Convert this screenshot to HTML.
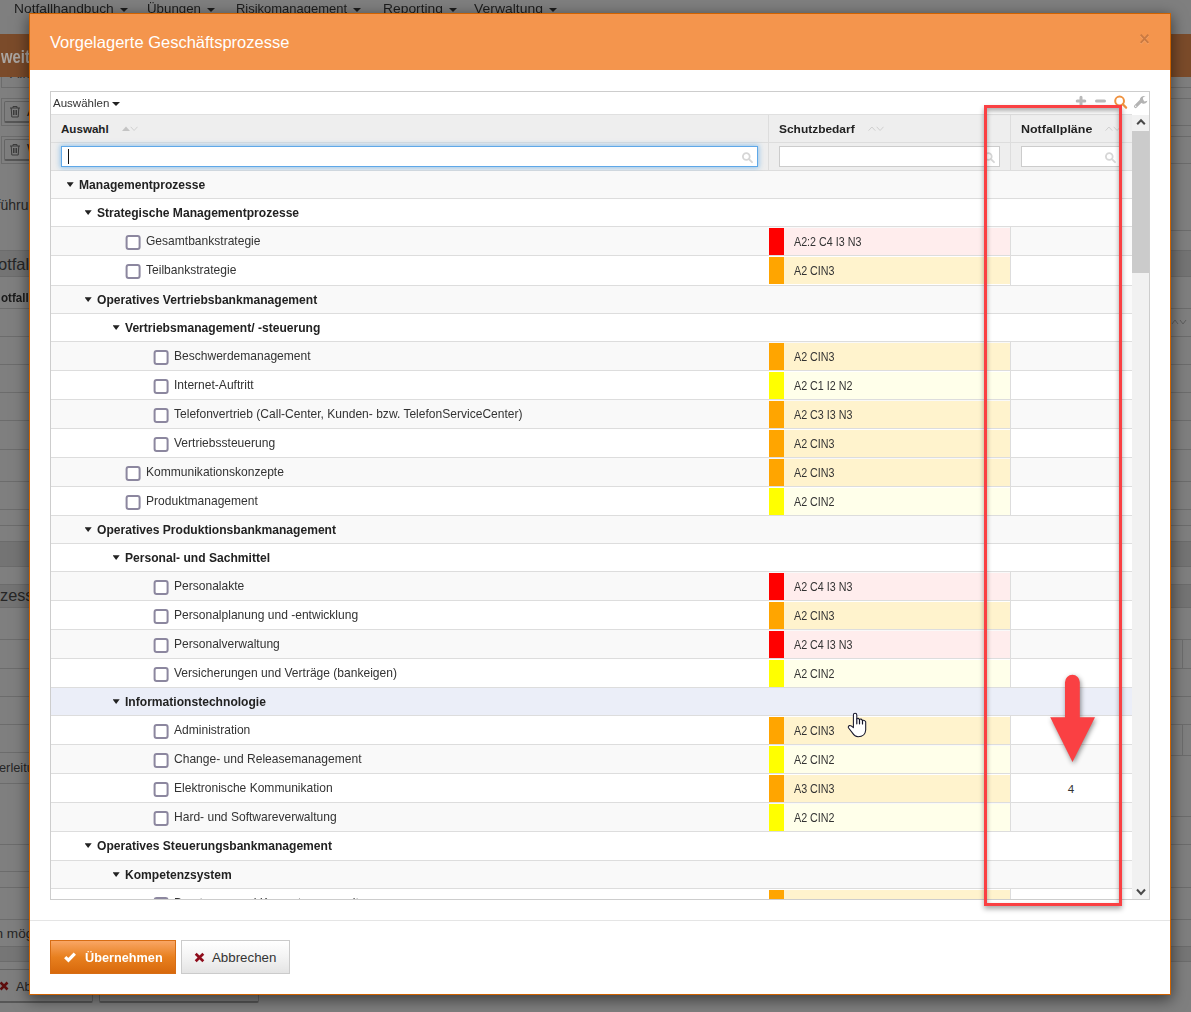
<!DOCTYPE html>
<html lang="de"><head><meta charset="utf-8"><title>Vorgelagerte Geschäftsprozesse</title>
<style>
*{box-sizing:border-box;margin:0;padding:0}
html,body{width:1191px;height:1012px;overflow:hidden}
body{position:relative;background:#7f7f7f;font-family:"Liberation Sans",sans-serif;color:#222;font-size:12px}
.abs{position:absolute}
/* ---------- dimmed background page ---------- */
.bg{position:absolute;left:0;top:0;width:1191px;height:1012px;overflow:hidden}
.bg .nav{position:absolute;top:0px;left:0;height:22px;font-size:12.6px;line-height:14px;color:#1c1c1c;white-space:nowrap}
.bg .nav span{position:absolute;top:1.7px;transform-origin:0 50%}
.bg .car{position:absolute;width:0;height:0;border-left:4px solid transparent;border-right:4px solid transparent;border-top:4px solid #1c1c1c;top:8px}
.bg .bar{position:absolute;background:#7b4b2a}
.bg .ln{position:absolute;left:0;width:1191px;height:1px;background:#6c6c6c}
.bg .vln{position:absolute;width:1px;background:#6c6c6c}
.bg .band{position:absolute;left:0;width:1191px;background:#747474;border-top:1px solid #6c6c6c;border-bottom:1px solid #6c6c6c}
.bg .ob{position:absolute;border:1px solid #6c6c6c}
.bg .bb{position:absolute;border:1px solid #646464;border-bottom:2px solid #575757;border-radius:2px;background:#7e7e7e}
.bg .t{position:absolute;white-space:nowrap;color:#1a1a1a}
/* ---------- modal ---------- */
.modal{position:absolute;left:29px;top:13px;width:1142px;height:982px;background:#fff;border:1px solid #cf6200;box-shadow:0 4px 14px 1px rgba(0,0,0,.5)}
.mh{position:absolute;left:0;top:0;width:1140px;height:56px;background:#f4954d}
.mh h4{position:absolute;left:20px;top:18px;font-size:16.5px;line-height:20px;font-weight:normal;color:#fff;white-space:nowrap}
.mh .x{position:absolute;left:1110px;top:20px;width:9px;height:9.5px;overflow:visible}
.fl{position:absolute;left:30px;top:920px;width:1140px;height:1px;background:#e5e5e5}
.sx{transform-origin:0 50%;display:inline-block}
/* ---------- grid ---------- */
.grid{position:absolute;left:50px;top:91px;width:1100px;height:808px;overflow:hidden;background:#fff}
.gridb{position:absolute;left:50px;top:91px;width:1100px;height:809px;border:1px solid #cdcdcd;pointer-events:none}
.tb{position:absolute;left:0;top:0;width:1100px;height:24px}
.tb .sel{position:absolute;left:3px;top:5px;font-size:11.2px;line-height:14px;color:#333;transform:scaleX(1.03);transform-origin:0 50%}
.tb .car{position:absolute;left:62px;top:11px;width:0;height:0;border-left:4px solid transparent;border-right:4px solid transparent;border-top:4px solid #222}
.hd{position:absolute;left:0;top:23px;width:1082px;height:29px;background:#eeeeee;border-top:1px solid #e0e0e0;border-bottom:1px solid #ddd}
.ft{position:absolute;left:0;top:52px;width:1082px;height:28px;background:#eeeeee;border-bottom:1px solid #ddd}
.hd b{position:absolute;top:7px;font-size:11.6px;line-height:14px;color:#222;white-space:nowrap;transform:scaleX(1.03);transform-origin:0 50%}
.hd svg{position:absolute;top:11px}
.cv{position:absolute;top:24px;width:1px;height:56px;background:#ddd}
.inp{position:absolute;height:21px;background:#fff;border:1px solid #ccc}
.inp.f{border-color:#5fa8e8;box-shadow:0 0 5px 1px rgba(102,175,233,.65)}
.inp svg{position:absolute;right:3px;top:4px}
.cur{position:absolute;left:18px;top:58px;width:1px;height:15px;background:#111}
.row{position:absolute;left:0;width:1082px;background:#fff;border-bottom:1px solid #ddd}
.row.alt{background:#f9f9f9}
.row.hov{background:#ebeef8}
.ar{position:absolute;top:11.3px;margin-left:.6px;width:7.1px;height:4.6px;background:#222;clip-path:polygon(0 0,100% 0,50% 100%)}
.gt{position:absolute;top:7px;font-size:12.4px;line-height:15px;white-space:nowrap;color:#222;transform:scaleX(.975);transform-origin:0 50%}
.cb{position:absolute;top:8px;width:15px;height:15px;border:2px solid #8c879f;border-radius:3px;background:#fff;transform:translateX(-.4px)}
.lt{position:absolute;top:7px;font-size:12.4px;line-height:15px;white-space:nowrap;color:#333;transform:scaleX(.972);transform-origin:0 50%}
.sb{position:absolute;left:719px;top:1px;width:242px;height:27px}
.sb i{position:absolute;left:0;top:0;width:15px;height:27px}
.sb span{position:absolute;left:25px;top:7px;font-size:12.1px;line-height:14px;color:#333;white-space:nowrap;transform:scaleX(.887);transform-origin:0 50%}
.sb.r{background:#ffeded}.sb.r i{background:#ff0000}
.sb.o{background:#fff3cd}.sb.o i{background:#ffa500}
.sb.y{background:#ffffea}.sb.y i{background:#ffff00}
.vl{position:absolute;left:960px;top:0;width:1px;height:29px;background:#ddd}
.nf{position:absolute;left:961px;width:120px;text-align:center;top:8px;font-size:11.6px;line-height:14px;color:#333}
/* scrollbar */
.scr{position:absolute;left:1082px;top:24px;width:18px;height:785px;background:#f1f1f1}
.scr .th{position:absolute;left:0;top:16px;width:17px;height:142px;background:#cbcbcb}
.scr svg{position:absolute;left:4px}
/* buttons */
.btn{position:absolute;top:940px;height:34px;white-space:nowrap}
.b1{left:50px;width:126px;background:linear-gradient(#f9a665,#e8801f 50%,#d8690c);border:1px solid #d76d14;color:#fff}
.b2{left:181px;width:109px;background:linear-gradient(#fff,#f3f3f3 50%,#e4e4e4);border:1px solid #cbcbcb;color:#333}
.btn span{position:absolute;top:8px;line-height:17px}
.btn svg{position:absolute}
/* annotation */
.rr{position:absolute;left:984px;top:105px;width:138px;height:801px;border:3px solid #fa4043;box-shadow:0 3px 5px rgba(0,0,0,.33),inset 0 3px 5px rgba(0,0,0,.33)}
</style></head><body>
<div class="bg">
 <div class="nav">
  <span style="left:14px;transform:scaleX(1.096)">Notfallhandbuch</span><i class="car" style="left:120px"></i>
  <span style="left:147px;transform:scaleX(1.056)">Übungen</span><i class="car" style="left:207px"></i>
  <span style="left:236px;transform:scaleX(1.03)">Risikomanagement</span><i class="car" style="left:353px"></i>
  <span style="left:383px;transform:scaleX(1.099)">Reporting</span><i class="car" style="left:449px"></i>
  <span style="left:474px;transform:scaleX(1.107)">Verwaltung</span><i class="car" style="left:549px"></i>
 </div>
 <div class="ob" style="left:1px;top:60px;width:1200px;height:28px"></div>
 <span class="t" style="left:10px;top:65px;font-size:14px;color:#333">Alle</span>
 <div class="bar" style="left:0;top:34px;width:1191px;height:43px"></div>
 <b class="t" style="left:.5px;top:45.5px;font-size:19px;color:#aba6a2;transform:scaleX(.78);transform-origin:0 50%">weitere Suchoptionen</b>
 <div class="ob" style="left:1px;top:98px;width:1200px;height:28px"></div>
 <div class="bb" style="left:4px;top:101px;width:150px;height:22px"></div>
 <div class="ob" style="left:1px;top:136px;width:1200px;height:28px"></div>
 <div class="bb" style="left:4px;top:139px;width:150px;height:22px"></div>
 <svg class="abs" style="left:9px;top:105px" width="12" height="13" viewBox="0 0 12 13"><path d="M1 3h10M4 3V1.500h4V3M2.200 3l.6 9h6.400l.6-9M4.500 5v5M6 5v5M7.500 5v5" stroke="#3c3c3c" stroke-width="1" fill="none"/></svg>
 <svg class="abs" style="left:9px;top:143px" width="12" height="13" viewBox="0 0 12 13"><path d="M1 3h10M4 3V1.500h4V3M2.200 3l.6 9h6.400l.6-9M4.500 5v5M6 5v5M7.500 5v5" stroke="#3c3c3c" stroke-width="1" fill="none"/></svg>
 <span class="t" style="left:27px;top:103px;font-size:14px">Alle</span>
 <span class="t" style="left:27px;top:141px;font-size:14px">Wählen</span>
 <span class="t" style="right:1190.5px;top:197px;font-size:14px;color:#262626">Durchf</span><span class="t" style="left:.5px;top:197px;font-size:14px;color:#262626">ührung</span>
 <div class="ln" style="top:230px;left:1171px;width:20px"></div>
 <div class="band" style="top:250px;height:27px"></div>
 <span class="t" style="right:1193px;top:254.5px;font-size:16.5px;color:#262626">N</span><span class="t" style="left:-2px;top:254.5px;font-size:16.5px;color:#262626">otfallpläne</span>
 <b class="t" style="left:1.2px;top:290px;font-size:13.2px;transform:scaleX(.88);transform-origin:0 50%">otfallplan</b>
 <svg class="abs" style="left:1171px;top:318px" width="16" height="8" viewBox="0 0 16 8"><path d="M1 6l3-4 3 4M9 2l3 4 3-4" stroke="#5e5e5e" stroke-width="1" fill="none"/></svg>
 <div class="ln" style="top:308px"></div><div class="ln" style="top:336px"></div><div class="ln" style="top:364px"></div>
 <div class="ln" style="top:392px"></div><div class="ln" style="top:420px"></div><div class="ln" style="top:449px"></div>
 <div class="ln" style="top:481px"></div><div class="ln" style="top:509px"></div><div class="ln" style="top:525px"></div>
 <div class="band" style="top:541px;height:26px"></div>
 <div class="band" style="top:584px;height:24px"></div>
 <span class="t" style="right:1191px;top:585.5px;font-size:16.3px;color:#262626">Pro</span><span class="t" style="left:0px;top:585.5px;font-size:16.3px;color:#262626">zesse</span>
 <div class="ln" style="top:639px"></div><div class="ln" style="top:668px"></div><div class="ln" style="top:696px"></div>
 <div class="ln" style="top:724px"></div><div class="ln" style="top:752px;width:40px"></div><div class="ln" style="top:783px;width:40px"></div>
 <div class="ln" style="top:755px;left:1165px;width:26px"></div><div class="ln" style="top:816px;left:1165px;width:26px"></div>
 <div class="vln" style="left:1182px;top:639px;height:29px"></div><div class="vln" style="left:1182px;top:724px;height:31px"></div>
 <span class="t" style="right:1192px;top:760px;font-size:12.8px;color:#262626">Weit</span><span class="t" style="left:-1px;top:760px;font-size:12.8px;color:#262626">erleitung</span>
 <div class="ln" style="top:844px"></div><div class="ln" style="top:871px;width:40px"></div><div class="ln" style="top:887px"></div>
 <div class="ln" style="top:919px"></div>
 <span class="t" style="right:1195.5px;top:925.5px;font-size:13.6px;color:#262626">Auswahl vo</span><span class="t" style="left:-4.5px;top:925.5px;font-size:13.6px;color:#262626">n möglich</span>
 <div class="band" style="top:946px;height:16px;background:#767676"></div>
 <div class="bb" style="left:-10px;top:969px;width:103px;height:34px"></div>
 <div class="bb" style="left:99px;top:969px;width:160px;height:34px"></div>
 <svg class="abs" style="left:-1px;top:981px" width="10" height="10" viewBox="0 0 10 10"><path d="M1.500 1.500l7 7M8.500 1.500l-7 7" stroke="#5d0c0c" stroke-width="2.600" fill="none"/></svg>
 <span class="t" style="left:16px;top:979px;font-size:12.8px;color:#262626">Abbrechen</span>
</div>

<div class="modal">
 <div class="mh"><h4>Vorgelagerte Geschäftsprozesse</h4>
  <svg class="x" viewBox="0 0 9 9.5"><path d="M.7 1.700L8.300 9.800M8.300 1.700L.7 9.800" stroke="#f9b88a" stroke-width="1.800" fill="none" opacity=".5"/><path d="M.7 .7L8.300 8.800M8.300 .7L.7 8.800" stroke="#c97a42" stroke-width="1.900" fill="none"/></svg>
 </div>
</div>
<div class="fl"></div>

<div class="grid">
 <div class="tb"><span class="sel">Auswählen</span><i class="car"></i>
  <svg class="abs" style="left:1025px;top:4px" width="74" height="14" viewBox="0 0 74 14">
   <path d="M6 2.200v7.600M2.200 6h7.600" stroke="#b9b9b9" stroke-width="3" stroke-linecap="round" fill="none"/>
   <path d="M21.500 6h8" stroke="#b9b9b9" stroke-width="3" stroke-linecap="round" fill="none"/>
   <circle cx="44.600" cy="6" r="4.400" stroke="#f0923f" stroke-width="2" fill="none"/>
   <path d="M47.800 9.300l3.300 3.300" stroke="#f0923f" stroke-width="2.200" stroke-linecap="round" fill="none"/>
   <path d="M60.600 11.400l6.200-6.200" stroke="#b3b3b3" stroke-width="3.300" stroke-linecap="round" fill="none"/>
   <path d="M70.600 1.600a3.800 3.800 0 1 0 1.800 4.200l-2.900.6-1.900-1.800.8-2.700z" fill="#b3b3b3"/>
   <circle cx="60.700" cy="11.300" r=".7" fill="#fff"/>
  </svg>
 </div>
 <div class="hd">
  <b style="left:11px;transform:scaleX(1)">Auswahl</b>
  <svg style="left:72px" width="16" height="6" viewBox="0 0 16 6"><path d="M0 5l4-4.500 4 4.500z" fill="#c4c4c4"/><path d="M8.700 .8l3.400 3.700 3.400-3.700" stroke="#d0d0d0" stroke-width="1" fill="none"/></svg>
  <b style="left:729px">Schutzbedarf</b>
  <svg style="left:818px" width="16" height="6" viewBox="0 0 16 6"><path d="M.5 4.700l3.400-3.700 3.400 3.700M8.700 .8l3.400 3.700 3.400-3.700" stroke="#cfcfcf" stroke-width="1" fill="none"/></svg>
  <b style="left:971px;transform:scaleX(1.075)">Notfallpläne</b>
  <svg style="left:1055px" width="16" height="6" viewBox="0 0 16 6"><path d="M.5 4.700l3.400-3.700 3.400 3.700M8.700 .8l3.400 3.700 3.400-3.700" stroke="#cfcfcf" stroke-width="1" fill="none"/></svg>
 </div>
 <div class="ft"></div>
 <div class="cv" style="left:718px"></div>
 <div class="cv" style="left:960px"></div>
 <div class="inp f" style="left:11px;top:55px;width:697px"><svg width="13" height="13" viewBox="0 0 13 13"><circle cx="5.300" cy="5.500" r="3.400" stroke="#d6d6d6" stroke-width="1.800" fill="none"/><path d="M7.900 8.100l3.100 3.100" stroke="#d6d6d6" stroke-width="1.900" stroke-linecap="round"/></svg></div>
 <div class="cur"></div>
 <div class="inp" style="left:729px;top:55px;width:221px"><svg width="13" height="13" viewBox="0 0 13 13"><circle cx="5.300" cy="5.500" r="3.400" stroke="#d6d6d6" stroke-width="1.800" fill="none"/><path d="M7.900 8.100l3.100 3.100" stroke="#d6d6d6" stroke-width="1.900" stroke-linecap="round"/></svg></div>
 <div class="inp" style="left:971px;top:55px;width:100px"><svg width="13" height="13" viewBox="0 0 13 13"><circle cx="5.300" cy="5.500" r="3.400" stroke="#d6d6d6" stroke-width="1.800" fill="none"/><path d="M7.900 8.100l3.100 3.100" stroke="#d6d6d6" stroke-width="1.900" stroke-linecap="round"/></svg></div>
<div class="row g alt" style="top:80px;height:28px"><i class="ar" style="left:16px"></i><b class="gt" style="left:29px">Managementprozesse</b></div>
<div class="row g" style="top:108px;height:28px"><i class="ar" style="left:34px"></i><b class="gt" style="left:47px">Strategische Managementprozesse</b></div>
<div class="row l alt" style="top:136px;height:29px"><i class="cb" style="left:76px"></i><span class="lt" style="left:96px">Gesamtbankstrategie</span><div class="sb r"><i></i><span>A2:2 C4 I3 N3</span></div><div class="vl"></div></div>
<div class="row l" style="top:165px;height:30px"><i class="cb" style="left:76px"></i><span class="lt" style="left:96px">Teilbankstrategie</span><div class="sb o"><i></i><span>A2 CIN3</span></div><div class="vl"></div></div>
<div class="row g alt" style="top:195px;height:28px"><i class="ar" style="left:34px"></i><b class="gt" style="left:47px">Operatives Vertriebsbankmanagement</b></div>
<div class="row g" style="top:223px;height:28px"><i class="ar" style="left:62px"></i><b class="gt" style="left:75px">Vertriebsmanagement/ -steuerung</b></div>
<div class="row l alt" style="top:251px;height:29px"><i class="cb" style="left:104px"></i><span class="lt" style="left:124px">Beschwerdemanagement</span><div class="sb o"><i></i><span>A2 CIN3</span></div><div class="vl"></div></div>
<div class="row l" style="top:280px;height:29px"><i class="cb" style="left:104px"></i><span class="lt" style="left:124px">Internet-Auftritt</span><div class="sb y"><i></i><span>A2 C1 I2 N2</span></div><div class="vl"></div></div>
<div class="row l alt" style="top:309px;height:29px"><i class="cb" style="left:104px"></i><span class="lt" style="left:124px">Telefonvertrieb (Call-Center, Kunden- bzw. TelefonServiceCenter)</span><div class="sb o"><i></i><span>A2 C3 I3 N3</span></div><div class="vl"></div></div>
<div class="row l" style="top:338px;height:29px"><i class="cb" style="left:104px"></i><span class="lt" style="left:124px">Vertriebssteuerung</span><div class="sb o"><i></i><span>A2 CIN3</span></div><div class="vl"></div></div>
<div class="row l alt" style="top:367px;height:29px"><i class="cb" style="left:76px"></i><span class="lt" style="left:96px">Kommunikationskonzepte</span><div class="sb o"><i></i><span>A2 CIN3</span></div><div class="vl"></div></div>
<div class="row l" style="top:396px;height:29px"><i class="cb" style="left:76px"></i><span class="lt" style="left:96px">Produktmanagement</span><div class="sb y"><i></i><span>A2 CIN2</span></div><div class="vl"></div></div>
<div class="row g alt" style="top:425px;height:28px"><i class="ar" style="left:34px"></i><b class="gt" style="left:47px">Operatives Produktionsbankmanagement</b></div>
<div class="row g" style="top:453px;height:28px"><i class="ar" style="left:62px"></i><b class="gt" style="left:75px">Personal- und Sachmittel</b></div>
<div class="row l alt" style="top:481px;height:29px"><i class="cb" style="left:104px"></i><span class="lt" style="left:124px">Personalakte</span><div class="sb r"><i></i><span>A2 C4 I3 N3</span></div><div class="vl"></div></div>
<div class="row l" style="top:510px;height:29px"><i class="cb" style="left:104px"></i><span class="lt" style="left:124px">Personalplanung und -entwicklung</span><div class="sb o"><i></i><span>A2 CIN3</span></div><div class="vl"></div></div>
<div class="row l alt" style="top:539px;height:29px"><i class="cb" style="left:104px"></i><span class="lt" style="left:124px">Personalverwaltung</span><div class="sb r"><i></i><span>A2 C4 I3 N3</span></div><div class="vl"></div></div>
<div class="row l" style="top:568px;height:29px"><i class="cb" style="left:104px"></i><span class="lt" style="left:124px">Versicherungen und Verträge (bankeigen)</span><div class="sb y"><i></i><span>A2 CIN2</span></div><div class="vl"></div></div>
<div class="row g alt hov" style="top:597px;height:28px"><i class="ar" style="left:62px"></i><b class="gt" style="left:75px">Informationstechnologie</b></div>
<div class="row l" style="top:625px;height:29px"><i class="cb" style="left:104px"></i><span class="lt" style="left:124px">Administration</span><div class="sb o"><i></i><span>A2 CIN3</span></div><div class="vl"></div></div>
<div class="row l alt" style="top:654px;height:29px"><i class="cb" style="left:104px"></i><span class="lt" style="left:124px">Change- und Releasemanagement</span><div class="sb y"><i></i><span>A2 CIN2</span></div><div class="vl"></div></div>
<div class="row l" style="top:683px;height:29px"><i class="cb" style="left:104px"></i><span class="lt" style="left:124px">Elektronische Kommunikation</span><div class="sb o"><i></i><span>A3 CIN3</span></div><div class="vl"></div><span class="nf">4</span></div>
<div class="row l alt" style="top:712px;height:29px"><i class="cb" style="left:104px"></i><span class="lt" style="left:124px">Hard- und Softwareverwaltung</span><div class="sb y"><i></i><span>A2 CIN2</span></div><div class="vl"></div></div>
<div class="row g" style="top:741px;height:29px"><i class="ar" style="left:34px"></i><b class="gt" style="left:47px">Operatives Steuerungsbankmanagement</b></div>
<div class="row g alt" style="top:770px;height:28px"><i class="ar" style="left:62px"></i><b class="gt" style="left:75px">Kompetenzsystem</b></div>
<div class="row l" style="top:798px;height:29px"><i class="cb" style="left:104px"></i><span class="lt" style="left:124px">Beratungs- und Kompetenzverwaltung</span><div class="sb o"><i></i><span>A2 CIN3</span></div><div class="vl"></div></div>
 <div class="scr"><div class="th"></div>
  <svg style="top:3px" width="10" height="8" viewBox="0 0 10 8"><path d="M1.200 6.300l3.800-4.100 3.800 4.100" stroke="#4a4a4a" stroke-width="2" fill="none"/></svg>
  <svg style="top:773px" width="10" height="8" viewBox="0 0 10 8"><path d="M1 1.500l4 4.500 4-4.500" stroke="#4a4a4a" stroke-width="2" fill="none"/></svg>
 </div>
</div>
<div class="gridb"></div>

<div class="btn b1"><svg style="left:11px;top:10px" width="16" height="13" viewBox="0 0 16 13"><path d="M3.200 6.200L6.400 9.200L12.800 2.600" stroke="#fff" stroke-width="3.200" fill="none"/></svg><b><span style="left:34px;font-size:13.6px;transform:scaleX(.935);transform-origin:0 50%">Übernehmen</span></b></div>
<div class="btn b2"><svg style="left:12px;top:11px" width="11" height="11" viewBox="0 0 11 11"><path d="M1.700 1.700l7.600 7.600M9.300 1.700l-7.600 7.600" stroke="#8f0d1c" stroke-width="2.700" fill="none"/></svg><span style="left:30px;font-size:13.3px">Abbrechen</span></div>

<div class="rr"></div>
<svg class="abs" style="left:1040px;top:668px;filter:drop-shadow(1px 2px 2.500px rgba(0,0,0,.45))" width="66" height="104" viewBox="0 0 66 104"><path d="M25 14.200a7.400 7.400 0 0 1 14.800 0V49.300H55L32.500 94 10.200 49.300H25z" fill="#fa4043"/></svg>
<svg class="abs" style="left:847px;top:712px" width="20" height="26" viewBox="-1 -1 20 26"><path d="M5.400 14.600V1.900a1.700 1.700 0 0 1 3.400 0V5.900q1.400-1.400 2.700 .7q1.500-1.400 3 .9q1.700-1 3.200 1.300V17q-.5 6.700-7.600 6.700q-3.300 0-5.700-3.800L.6 15q-1-1.600 1-2.500q1.200-.3 3.800 2.100z" fill="#fff" stroke="#15152a" stroke-width="1.050" stroke-linejoin="round"/><path d="M8.800 5.900V10.800M11.500 6.600V10.800M14.500 7.500V11" stroke="#15152a" stroke-width="1.200" fill="none" stroke-linecap="round"/></svg>
</body></html>
